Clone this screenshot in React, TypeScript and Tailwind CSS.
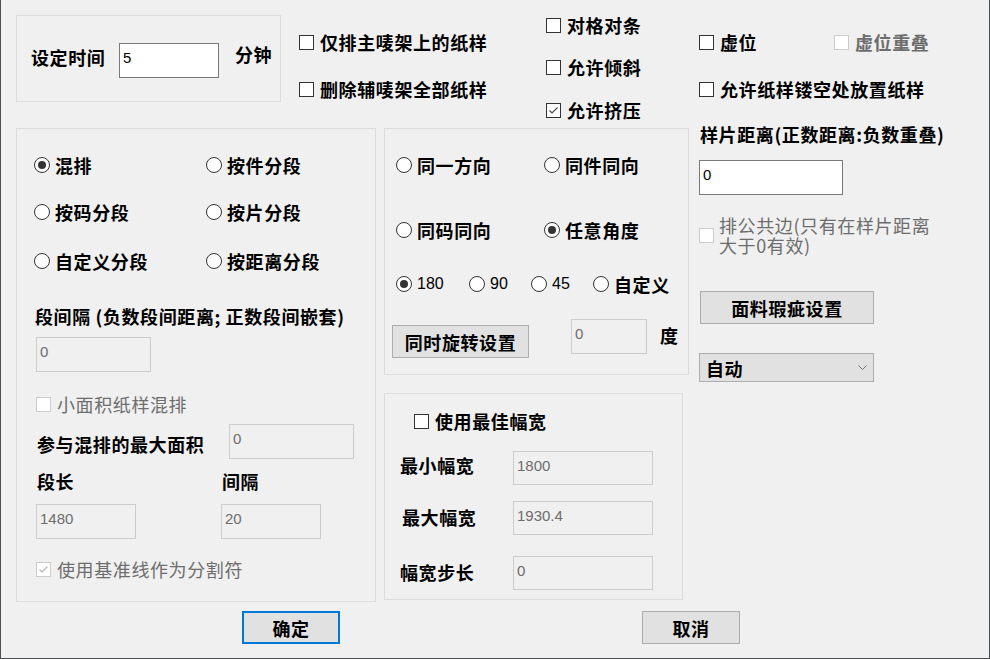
import React from 'react';

const cjk = "font-['Noto_Sans_CJK_SC',sans-serif] text-[18px] leading-[24px] tracking-[0.6px] font-bold";
const num = "font-['Liberation_Sans',sans-serif] text-[15px] leading-[20px] font-normal tracking-normal";

function Check({
  label,
  checked = false,
  disabled = false,
  className = '',
}: {
  label: React.ReactNode;
  checked?: boolean;
  disabled?: boolean;
  className?: string;
}) {
  return (
    <div className={`flex items-center h-[24px] ${className}`}>
      <span
        className={`w-[15px] h-[15px] shrink-0 border bg-white flex items-center justify-center ${
          disabled ? 'border-[#cccccc]' : 'border-[#333333]'
        }`}
      >
        {checked && (
          <svg width="11" height="11" viewBox="0 0 11 11">
            <path
              d="M1.5 5.5 L4 8 L9.5 2.5"
              fill="none"
              stroke={disabled ? '#b5b5b5' : '#4a4a4a'}
              strokeWidth="1.2"
            />
          </svg>
        )}
      </span>
      <span className={`ml-[6px] whitespace-nowrap ${disabled ? 'text-[#6d6d6d]' : 'text-black'}`}>{label}</span>
    </div>
  );
}

function Radio({
  label,
  checked = false,
  className = '',
  numeric = false,
}: {
  label: string;
  checked?: boolean;
  className?: string;
  numeric?: boolean;
}) {
  return (
    <div className={`flex items-center h-[24px] ${className}`}>
      <span className="w-4 h-4 shrink-0 rounded-full border border-[#333333] bg-white flex items-center justify-center">
        {checked && <span className="w-2 h-2 rounded-full bg-[#333333]" />}
      </span>
      <span className={`ml-[5px] whitespace-nowrap text-black ${numeric ? `${num} !text-[16px]` : ''}`}>{label}</span>
    </div>
  );
}

function Field({
  value,
  disabled = true,
  className = '',
}: {
  value: string;
  disabled?: boolean;
  className?: string;
}) {
  return (
    <div
      className={`shrink-0 border pl-[3px] pt-[4px] ${num} ${
        disabled ? 'bg-[#f0f0f0] border-[#cccccc] text-[#6d6d6d]' : 'bg-white border-[#7a7a7a] text-black'
      } ${className}`}
    >
      {value}
    </div>
  );
}

function Btn({ children, className = '' }: { children: React.ReactNode; className?: string }) {
  return (
    <div
      className={`shrink-0 bg-[#e1e1e1] border border-[#adadad] flex items-center justify-center text-black ${className}`}
    >
      {children}
    </div>
  );
}

export default function App() {
  return (
    <div
      className={`w-[990px] h-[659px] bg-[#f0f0f0] border-l border-r border-b border-[#4b4f56] overflow-hidden ${cjk}`}
    >
      <div className="flex h-[602px]">
        {/* left + middle */}
        <div className="w-[698px] shrink-0 flex flex-col">
          <div className="flex h-[128px] items-start">
            <div className="ml-[15px] mt-[15px] w-[265px] h-[87px] border border-[#dcdcdc] flex items-start pl-[14px]">
              <span className="mt-[29px] w-[88px]">设定时间</span>
              <Field value="5" disabled={false} className="mt-[27px] w-[100px] h-[35px]" />
              <span className="mt-[26px] ml-[16px]">分钟</span>
            </div>
            <div className="ml-[18px] w-[247px] flex flex-col">
              <Check className="mt-[30px]" label="仅排主唛架上的纸样" />
              <Check className="mt-[23px]" label="删除辅唛架全部纸样" />
            </div>
            <div className="flex flex-col">
              <Check className="mt-[13px]" label="对格对条" />
              <Check className="mt-[18px]" label="允许倾斜" />
              <Check className="mt-[19px]" label="允许挤压" checked />
            </div>
          </div>

          <div className="flex items-start">
            {/* left group */}
            <div className="ml-[15px] w-[360px] h-[474px] border border-[#dcdcdc] pl-[17px] flex flex-col">
              <div className="mt-[24px] flex">
                <Radio className="w-[172px]" label="混排" checked />
                <Radio label="按件分段" />
              </div>
              <div className="mt-[23px] flex">
                <Radio className="w-[172px]" label="按码分段" />
                <Radio label="按片分段" />
              </div>
              <div className="mt-[25px] flex">
                <Radio className="w-[172px]" label="自定义分段" />
                <Radio label="按距离分段" />
              </div>
              <div className="mt-[31px] ml-[1px] whitespace-nowrap">段间隔 (负数段间距离; 正数段间嵌套)</div>
              <Field value="0" className="mt-[9px] ml-[2px] w-[115px] h-[35px]" />
              <Check className="mt-[20px] ml-[2px] font-normal" label="小面积纸样混排" disabled />
              <div className="mt-[8px] flex items-start h-[35px]">
                <span className="ml-[3px] mt-[8px] w-[192px] whitespace-nowrap">参与混排的最大面积</span>
                <Field value="0" className="w-[125px] h-[35px]" />
              </div>
              <div className="mt-[10px] flex h-[24px]">
                <span className="ml-[3px] w-[185px]">段长</span>
                <span>间隔</span>
              </div>
              <div className="mt-[11px] flex">
                <Field value="1480" className="ml-[2px] w-[100px] h-[35px]" />
                <Field value="20" className="ml-[85px] w-[100px] h-[35px]" />
              </div>
              <Check className="mt-[18px] ml-[2px] font-normal" label="使用基准线作为分割符" checked disabled />
            </div>

            {/* middle column */}
            <div className="ml-[8px] flex flex-col">
              <div className="w-[305px] h-[247px] border border-[#dcdcdc] flex flex-col">
                <div className="mt-[24px] ml-[11px] flex">
                  <Radio className="w-[148px]" label="同一方向" />
                  <Radio label="同件同向" />
                </div>
                <div className="mt-[41px] ml-[11px] flex">
                  <Radio className="w-[148px]" label="同码同向" />
                  <Radio label="任意角度" checked />
                </div>
                <div className="mt-[30px] ml-[11px] flex">
                  <Radio className="w-[73px]" label="180" numeric checked />
                  <Radio className="w-[62px]" label="90" numeric />
                  <Radio className="w-[62px]" label="45" numeric />
                  <Radio label="自定义" />
                </div>
                <div className="mt-[23px] ml-[7px] flex items-start">
                  <Btn className="mt-[6px] w-[137px] h-[33px]">同时旋转设置</Btn>
                  <Field value="0" className="ml-[42px] w-[76px] h-[35px]" />
                  <span className="ml-[13px] mt-[4px]">度</span>
                </div>
              </div>

              <div className="mt-[18px] w-[299px] h-[207px] border border-[#dcdcdc] flex flex-col">
                <Check className="mt-[15px] ml-[29px]" label="使用最佳幅宽" />
                <div className="mt-[18px] ml-[15px] flex items-start">
                  <span className="mt-[2px] w-[113px]">最小幅宽</span>
                  <Field value="1800" className="w-[140px] h-[34px]" />
                </div>
                <div className="mt-[16px] ml-[15px] flex items-start">
                  <span className="mt-[4px] ml-[2px] w-[111px]">最大幅宽</span>
                  <Field value="1930.4" className="w-[140px] h-[34px]" />
                </div>
                <div className="mt-[21px] ml-[15px] flex items-start">
                  <span className="mt-[4px] w-[113px]">幅宽步长</span>
                  <Field value="0" className="w-[140px] h-[34px]" />
                </div>
              </div>
            </div>
          </div>
        </div>

        {/* right column */}
        <div className="flex flex-col">
          <div className="mt-[30px] flex">
            <Check className="w-[135px]" label="虚位" />
            <Check label="虚位重叠" disabled />
          </div>
          <Check className="mt-[23px]" label="允许纸样镂空处放置纸样" />
          <div className="mt-[21px] ml-[1px] whitespace-nowrap">样片距离(正数距离:负数重叠)</div>
          <Field value="0" disabled={false} className="mt-[14px] w-[144px] h-[35px]" />
          <div className="mt-[20px] flex items-center h-[40px]">
            <span className="w-[15px] h-[15px] shrink-0 border border-[#cccccc] bg-white" />
            <div className="ml-[5px] flex flex-col text-[#6d6d6d] font-normal whitespace-nowrap">
              <span className="h-[20px] leading-[20px]">排公共边(只有在样片距离</span>
              <span className="h-[20px] leading-[20px]">大于0有效)</span>
            </div>
          </div>
          <Btn className="mt-[36px] ml-[1px] w-[174px] h-[33px]">面料瑕疵设置</Btn>
          <div className="mt-[29px] w-[175px] h-[29px] bg-[#e1e1e1] border border-[#adadad] flex items-center justify-between pl-[6px] pr-[6px]">
            <span>自动</span>
            <svg width="9" height="6" viewBox="0 0 9 6">
              <path d="M0.5 0.5 L4.5 4.5 L8.5 0.5" fill="none" stroke="#707070" strokeWidth="1" />
            </svg>
          </div>
        </div>
      </div>

      <div className="flex mt-[9px]">
        <Btn className="ml-[241px] w-[98px] h-[33px] !border-2 !border-[#0078d7]">确定</Btn>
        <Btn className="ml-[302px] w-[98px] h-[33px]">取消</Btn>
      </div>
    </div>
  );
}
